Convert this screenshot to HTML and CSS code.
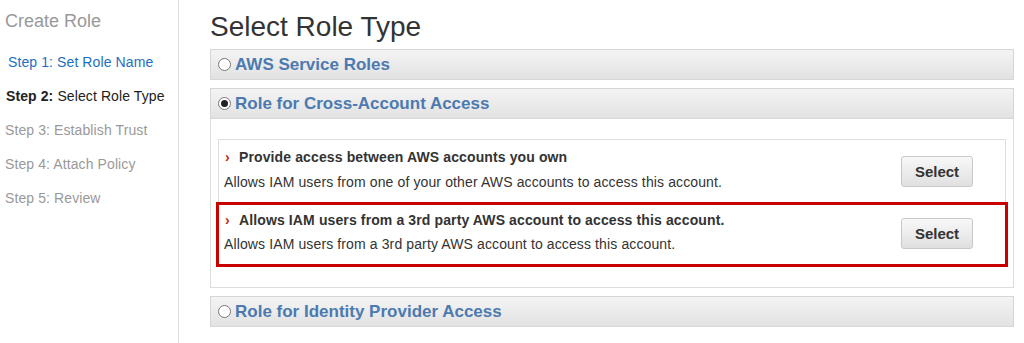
FILE: index.html
```html
<!DOCTYPE html>
<html lang="en">

<head>
    <meta charset="UTF-8">
    <title>Create Role</title>
    <link rel="stylesheet" href="styles.css">
</head>

<body>

    <!-- Wizard steps -->
    <div class="sidebar">
        <h2>Create Role</h2>
        <ul class="steps">
            <li class="done">Step 1: Set Role Name</li>
            <li class="current"><b>Step 2:</b> Select Role Type</li>
            <li>Step 3: Establish Trust</li>
            <li>Step 4: Attach Policy</li>
            <li>Step 5: Review</li>
        </ul>
    </div>

    <div class="main">
        <h1>Select Role Type</h1>

        <div class="panel">
            <div class="panel-head"><span class="radio"></span>AWS Service Roles</div>
        </div>

        <div class="panel">
            <div class="panel-head"><span class="radio checked"></span>Role for Cross-Account Access</div>
            <div class="panel-body">
                <div class="options">
                    <div class="option">
                        <div class="option-text">
                            <div class="option-title"><span class="chev">&rsaquo;</span>Provide access between AWS accounts you own</div>
                            <div class="option-desc">Allows IAM users from one of your other AWS accounts to access this account.</div>
                        </div>
                        <button class="btn">Select</button>
                    </div>
                    <div class="option highlight">
                        <div class="option-text">
                            <div class="option-title"><span class="chev">&rsaquo;</span>Allows IAM users from a 3rd party AWS account to access this account.</div>
                            <div class="option-desc">Allows IAM users from a 3rd party AWS account to access this account.</div>
                        </div>
                        <button class="btn">Select</button>
                    </div>
                </div>
            </div>
        </div>

        <div class="panel">
            <div class="panel-head"><span class="radio"></span>Role for Identity Provider Access</div>
        </div>
    </div>

</body>

</html>
```

FILE: styles.css
```css
body {
    margin: 0;
    font-family: "Liberation Sans", Arial, sans-serif;
    background: #fff;
    color: #333;
    display: flex;
    min-height: 100vh;
}

.sidebar {
    width: 179px;
    border-right: 1px solid #ddd;
    padding: 10px 0 0 5px;
    box-sizing: border-box;
}

.sidebar h2 {
    margin: 0;
    font-size: 18px;
    line-height: 22px;
    font-weight: normal;
    color: #999;
}

.steps {
    list-style: none;
    margin: 13px 0 0;
    padding: 0;
}

.steps li {
    font-size: 14px;
    line-height: 34px;
    color: #999;
    letter-spacing: 0.1px;
}

.steps li.done {
    color: #1d6fbe;
    padding-left: 3px;
}

.steps li.current {
    color: #222;
    padding-left: 1px;
}

.main {
    flex: 1;
    padding: 11px 10px 0 31px;
}

h1 {
    margin: 0 0 6px;
    font-size: 28px;
    line-height: 32px;
    font-weight: normal;
    color: #333;
}

.panel {
    margin-bottom: 8px;
}

.panel-head {
    display: flex;
    align-items: center;
    height: 29px;
    padding-left: 7px;
    border: 1px solid #d6d6d6;
    background: linear-gradient(#f4f4f4, #e2e2e2);
    font-size: 17px;
    font-weight: bold;
    color: #4c7ab0;
}

.radio {
    width: 11px;
    height: 11px;
    border: 1px solid #777;
    border-radius: 50%;
    background: #fff;
    margin-right: 4px;
    position: relative;
}

.radio.checked::after {
    content: "";
    position: absolute;
    width: 7px;
    height: 7px;
    border-radius: 50%;
    background: #222;
    top: 2px;
    left: 2px;
}

.panel-body {
    border: 1px solid #ddd;
    border-top: none;
    padding: 20px 7px 20px;
}

.options {
    border: 1px solid #ddd;
}

.option {
    display: flex;
    align-items: center;
    padding: 8px 32px 11px 5px;
}

.option.highlight {
    border: 3px solid #c80000;
    margin: 0 -3px -1px -3px;
    padding: 6px 32px 11px 5px;
}

.option-text {
    flex: 1;
}

.option-title {
    font-size: 14px;
    line-height: 18px;
    font-weight: bold;
    color: #333;
    letter-spacing: 0.12px;
}

.chev {
    color: #c42a12;
    display: inline-block;
    width: 14px;
    padding-left: 1px;
    font-weight: bold;
}

.option-desc {
    margin-top: 7px;
    font-size: 14px;
    line-height: 18px;
    color: #333;
    letter-spacing: 0.12px;
}

.highlight .option-desc {
    margin-top: 6px;
}

.btn {
    width: 72px;
    height: 31px;
    border: 1px solid #c8c8c8;
    border-radius: 3px;
    background: linear-gradient(#f8f8f8, #e0e0e0);
    font-family: inherit;
    font-size: 15px;
    font-weight: bold;
    color: #333;
    margin-top: 3px;
    cursor: pointer;
}
```
